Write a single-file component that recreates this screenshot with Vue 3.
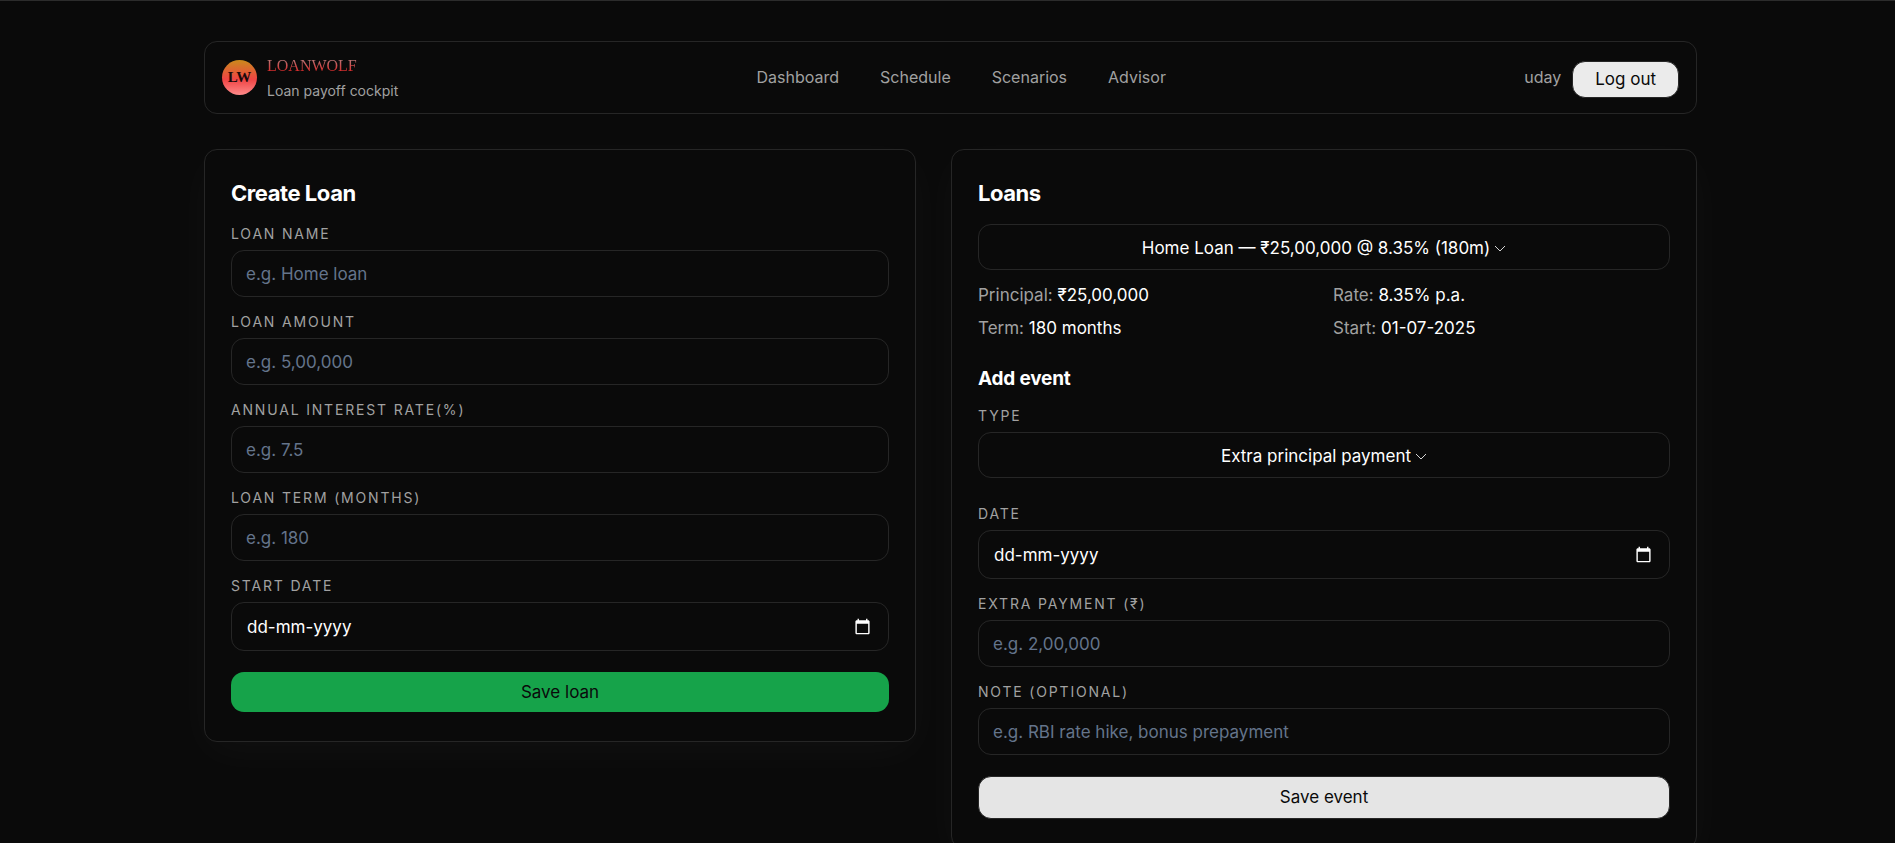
<template>
  <div class="page">
    <div class="container">
      <header class="topbar">
        <div class="brand">
          <div class="brand-mark">LW</div>
          <div class="brand-text">
            <div class="brand-name">LOANWOLF</div>
            <div class="brand-sub">Loan payoff cockpit</div>
          </div>
        </div>
        <nav class="links">
          <a v-for="l in links" :key="l" href="#">{{ l }}</a>
        </nav>
        <div class="user">
          <span>{{ user }}</span>
          <button type="button" class="btn-logout">Log out</button>
        </div>
      </header>

      <main class="columns">
        <form class="card" @submit.prevent>
          <h2>Create Loan</h2>
          <div v-for="f in loanFields" :key="f.id" class="field">
            <label :for="f.id">{{ f.label }}</label>
            <input :id="f.id" v-model="loan[f.id]" type="text" :placeholder="f.placeholder" />
          </div>
          <div class="field">
            <label for="start">Start date</label>
            <div class="date">
              <input id="start" v-model="loan.start" type="text" placeholder="dd-mm-yyyy" />
              <button type="button" class="picker" aria-label="Pick a date">
                <svg viewBox="0 0 24 24"><path d="M20 3h-1V1h-2v2H7V1H5v2H4c-1.100 0-2 .9-2 2v16c0 1.100.9 2 2 2h16c1.100 0 2-.9 2-2V5c0-1.100-.9-2-2-2zm0 18H4V8h16v13z" /></svg>
              </button>
            </div>
          </div>
          <button type="submit" class="btn-loan">Save loan</button>
        </form>

        <form class="card" @submit.prevent>
          <h2>Loans</h2>
          <div class="picklist">
            <select v-model="selectedLoan" aria-label="Loan">
              <option value="home">Home Loan — ₹25,00,000 @ 8.35% (180m)</option>
            </select>
            <svg class="chevron" viewBox="0 0 12 8"><path d="M1 1l5 5 5-5" /></svg>
          </div>
          <div class="details">
            <div v-for="d in details" :key="d.label">
              <span>{{ d.label }}:</span> {{ d.value }}
            </div>
          </div>

          <h3>Add event</h3>
          <div class="field field-type">
            <label for="type">Type</label>
            <div class="picklist">
              <select id="type" v-model="event.type">
                <option value="extra">Extra principal payment</option>
              </select>
              <svg class="chevron" viewBox="0 0 12 8"><path d="M1 1l5 5 5-5" /></svg>
            </div>
          </div>
          <div class="field">
            <label for="date">Date</label>
            <div class="date">
              <input id="date" v-model="event.date" type="text" placeholder="dd-mm-yyyy" />
              <button type="button" class="picker" aria-label="Pick a date">
                <svg viewBox="0 0 24 24"><path d="M20 3h-1V1h-2v2H7V1H5v2H4c-1.100 0-2 .9-2 2v16c0 1.100.9 2 2 2h16c1.100 0 2-.9 2-2V5c0-1.100-.9-2-2-2zm0 18H4V8h16v13z" /></svg>
              </button>
            </div>
          </div>
          <div v-for="f in eventFields" :key="f.id" class="field">
            <label :for="f.id">{{ f.label }}</label>
            <input :id="f.id" v-model="event[f.id]" type="text" :placeholder="f.placeholder" />
          </div>
          <button type="submit" class="btn-event">Save event</button>
        </form>
      </main>
    </div>
  </div>
</template>

<script setup>
import { reactive, ref } from 'vue'

const user = ref('uday')
const links = ['Dashboard', 'Schedule', 'Scenarios', 'Advisor']

const loanFields = [
  { id: 'name', label: 'Loan name', placeholder: 'e.g. Home loan' },
  { id: 'amount', label: 'Loan amount', placeholder: 'e.g. 5,00,000' },
  { id: 'rate', label: 'Annual interest rate(%)', placeholder: 'e.g. 7.5' },
  { id: 'term', label: 'Loan term (months)', placeholder: 'e.g. 180' },
]
const eventFields = [
  { id: 'extra', label: 'Extra payment (₹)', placeholder: 'e.g. 2,00,000' },
  { id: 'note', label: 'Note (optional)', placeholder: 'e.g. RBI rate hike, bonus prepayment' },
]

const loan = reactive({ name: '', amount: '', rate: '', term: '', start: '' })
const event = reactive({ type: 'extra', date: '', extra: '', note: '' })
const selectedLoan = ref('home')

const details = [
  { label: 'Principal', value: '₹25,00,000' },
  { label: 'Rate', value: '8.35% p.a.' },
  { label: 'Term', value: '180 months' },
  { label: 'Start', value: '01-07-2025' },
]
</script>

<style>
html { background: #0a0a0a; }
body { margin: 0; }
</style>

<style scoped>
* { box-sizing: border-box; }
.page { height: 100vh; overflow-y: auto; scrollbar-width: none; padding: 40px 18px 35px 24px; border-top: 1px solid #2c2c2c; background: #0a0a0a; color: #fff; font-family: Inter, "Liberation Sans", sans-serif; font-size: 17px; line-height: 25px; }
.container { max-width: 1493px; margin: 0 auto; }
input, select, button { font: inherit; color: inherit; }

.topbar { display: flex; align-items: center; justify-content: space-between; padding: 10px 17px; min-height: 73px; border: 1px solid #262626; border-radius: 13px; margin-bottom: 35px; }
.brand { display: flex; align-items: center; gap: 10px; }
.brand-mark { width: 35px; height: 35px; border-radius: 50%; background: linear-gradient(180deg, #ca8a1c, #ef4444 55%, #ff8a8a); color: #1a0a0a; font: bold 15px/35px "Liberation Serif", serif; text-align: center; }
.brand-name { font: 16px/25px "Liberation Serif", serif; background: linear-gradient(180deg, #a3a3a3, #dc2626 75%); background-clip: text; color: transparent; }
.brand-sub { font-size: 14px; color: #a1a1a1; }
.links { display: flex; gap: 41px; }
.links a { font-size: 16px; color: #a1a1a1; text-decoration: none; }
.user { display: flex; align-items: center; gap: 11px; font-size: 16px; color: #a1a1a1; }
.btn-logout { height: 37px; margin-top: 4px; padding: 0 22px; border: 1px solid #262626; border-radius: 13px; background: #ebebeb; color: #0a0a0a; font-size: 17px; cursor: pointer; }

.columns { display: grid; grid-template-columns: 712fr 746fr; gap: 35px; align-items: start; }
.card { padding: 26px 26px 29px; border: 1px solid #262626; border-radius: 13px; background: #0a0a0a; box-shadow: 0 11px 44px rgba(255,255,255,.03); }
h2 { margin: 3px 0 17px; font-size: 22px; line-height: 28px; font-weight: 700; letter-spacing: -.02em; }
h3 { margin: 25px 0 14px; font-size: 19px; line-height: 26px; font-weight: 700; letter-spacing: -.01em; }
.field { margin-bottom: 15px; }
.field-type { margin-bottom: 26px; }
.field label { display: block; margin-bottom: 6px; font-size: 14px; line-height: 20px; letter-spacing: .13em; text-transform: uppercase; color: #a1a1a1; }
.field input { display: block; width: 100%; height: 47px; padding: 0 14px; border: 1px solid #262626; border-radius: 13px; background: transparent; outline: none; }
.field input::placeholder { color: #64748b; opacity: 1; }
.field input:focus { border-color: #525252; }
.date { position: relative; }
.field .date input { height: 49px; padding: 0 15px; }
.field .date input::placeholder { color: #fff; }
.picker { position: absolute; right: 18px; top: 0; bottom: 0; display: flex; align-items: center; padding: 0; border: none; background: none; cursor: pointer; }
.picker svg { width: 17px; height: 17px; fill: #fff; }

.picklist { display: flex; align-items: center; justify-content: center; gap: 4px; height: 46px; padding-top: 3px; border: 1px solid #262626; border-radius: 13px; }
.picklist select { appearance: none; field-sizing: content; padding: 0; border: none; background: #0a0a0a; outline: none; cursor: pointer; }
.chevron { width: 12px; height: 8px; fill: none; stroke: #d4d4d4; }
.details { display: grid; grid-template-columns: 1fr 1fr; gap: 8px 18px; margin-top: 13px; }
.details span { color: #a1a1a1; }

.btn-loan, .btn-event { display: block; width: 100%; height: 40px; margin-top: 21px; border: none; border-radius: 13px; background: #16a34a; color: #0a0a0a; cursor: pointer; }
.btn-event { height: 43px; border: 1px solid #262626; background: #e5e5e5; }
</style>
